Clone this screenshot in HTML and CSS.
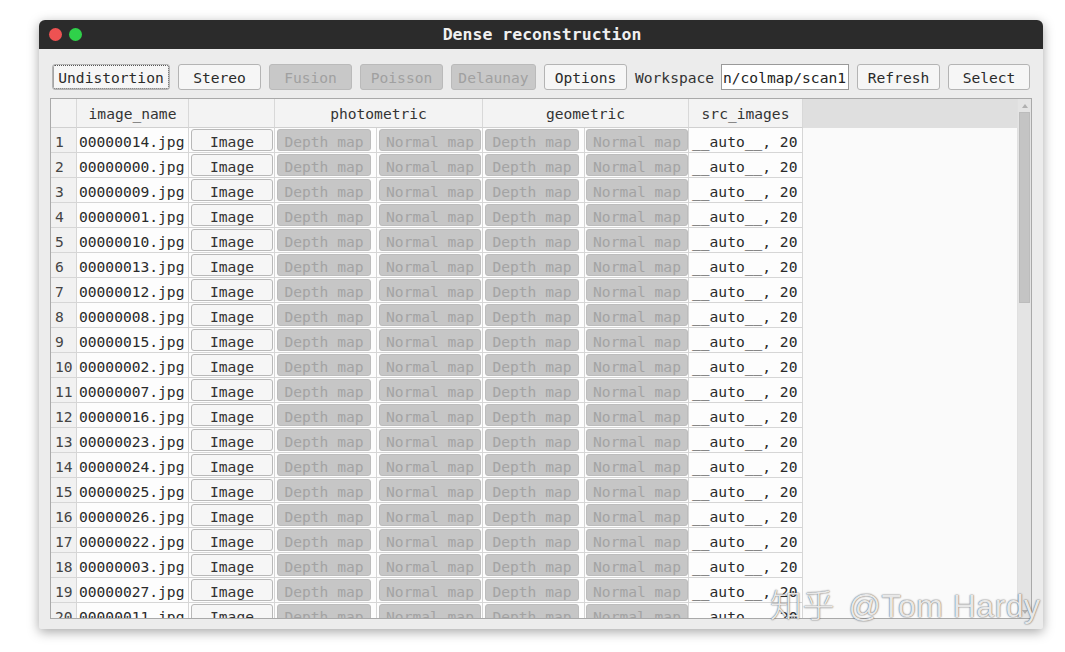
FILE: index.html
```html
<!DOCTYPE html>
<html>
<head>
<meta charset="utf-8">
<link rel="stylesheet" href="styles.css">
</head>
<body>
<div class="window">
  <div class="titlebar">
    <div class="lights"><span class="light red"></span><span class="light green"></span></div>
    <div class="title">Dense reconstruction</div>
  </div>
  <div class="content">
    <div class="toolbar">
      <button class="btn focus w118">Undistortion</button>
      <button class="btn w83">Stereo</button>
      <button class="btn dis w83">Fusion</button>
      <button class="btn dis w83">Poisson</button>
      <button class="btn dis w85">Delaunay</button>
      <button class="btn w83">Options</button>
      <span class="label">Workspace</span>
      <div class="input">n/colmap/scan1</div>
      <button class="btn w83">Refresh</button>
      <button class="btn w82">Select</button>
    </div>
    <div class="table">
      <div class="view">
        <div class="hrow">
          <div class="hc c-num"></div>
          <div class="hc c-name">image_name</div>
          <div class="hc c-img"></div>
          <div class="hc c-photo">photometric</div>
          <div class="hc c-geo">geometric</div>
          <div class="hc c-src">src_images</div>
          <div class="hc-rest"></div>
        </div>
        <div class="rows">
          <div class="row"><div class="num">1</div><div class="name">00000014.jpg</div><div class="cell c-img"><span class="b img">Image</span></div><div class="cell c-d1"><span class="b d dw">Depth map</span></div><div class="cell c-n1"><span class="b d nw">Normal map</span></div><div class="cell c-d2"><span class="b d dw">Depth map</span></div><div class="cell c-n2"><span class="b d nw">Normal map</span></div><div class="src">__auto__, 20</div></div>
          <div class="row"><div class="num">2</div><div class="name">00000000.jpg</div><div class="cell c-img"><span class="b img">Image</span></div><div class="cell c-d1"><span class="b d dw">Depth map</span></div><div class="cell c-n1"><span class="b d nw">Normal map</span></div><div class="cell c-d2"><span class="b d dw">Depth map</span></div><div class="cell c-n2"><span class="b d nw">Normal map</span></div><div class="src">__auto__, 20</div></div>
          <div class="row"><div class="num">3</div><div class="name">00000009.jpg</div><div class="cell c-img"><span class="b img">Image</span></div><div class="cell c-d1"><span class="b d dw">Depth map</span></div><div class="cell c-n1"><span class="b d nw">Normal map</span></div><div class="cell c-d2"><span class="b d dw">Depth map</span></div><div class="cell c-n2"><span class="b d nw">Normal map</span></div><div class="src">__auto__, 20</div></div>
          <div class="row"><div class="num">4</div><div class="name">00000001.jpg</div><div class="cell c-img"><span class="b img">Image</span></div><div class="cell c-d1"><span class="b d dw">Depth map</span></div><div class="cell c-n1"><span class="b d nw">Normal map</span></div><div class="cell c-d2"><span class="b d dw">Depth map</span></div><div class="cell c-n2"><span class="b d nw">Normal map</span></div><div class="src">__auto__, 20</div></div>
          <div class="row"><div class="num">5</div><div class="name">00000010.jpg</div><div class="cell c-img"><span class="b img">Image</span></div><div class="cell c-d1"><span class="b d dw">Depth map</span></div><div class="cell c-n1"><span class="b d nw">Normal map</span></div><div class="cell c-d2"><span class="b d dw">Depth map</span></div><div class="cell c-n2"><span class="b d nw">Normal map</span></div><div class="src">__auto__, 20</div></div>
          <div class="row"><div class="num">6</div><div class="name">00000013.jpg</div><div class="cell c-img"><span class="b img">Image</span></div><div class="cell c-d1"><span class="b d dw">Depth map</span></div><div class="cell c-n1"><span class="b d nw">Normal map</span></div><div class="cell c-d2"><span class="b d dw">Depth map</span></div><div class="cell c-n2"><span class="b d nw">Normal map</span></div><div class="src">__auto__, 20</div></div>
          <div class="row"><div class="num">7</div><div class="name">00000012.jpg</div><div class="cell c-img"><span class="b img">Image</span></div><div class="cell c-d1"><span class="b d dw">Depth map</span></div><div class="cell c-n1"><span class="b d nw">Normal map</span></div><div class="cell c-d2"><span class="b d dw">Depth map</span></div><div class="cell c-n2"><span class="b d nw">Normal map</span></div><div class="src">__auto__, 20</div></div>
          <div class="row"><div class="num">8</div><div class="name">00000008.jpg</div><div class="cell c-img"><span class="b img">Image</span></div><div class="cell c-d1"><span class="b d dw">Depth map</span></div><div class="cell c-n1"><span class="b d nw">Normal map</span></div><div class="cell c-d2"><span class="b d dw">Depth map</span></div><div class="cell c-n2"><span class="b d nw">Normal map</span></div><div class="src">__auto__, 20</div></div>
          <div class="row"><div class="num">9</div><div class="name">00000015.jpg</div><div class="cell c-img"><span class="b img">Image</span></div><div class="cell c-d1"><span class="b d dw">Depth map</span></div><div class="cell c-n1"><span class="b d nw">Normal map</span></div><div class="cell c-d2"><span class="b d dw">Depth map</span></div><div class="cell c-n2"><span class="b d nw">Normal map</span></div><div class="src">__auto__, 20</div></div>
          <div class="row"><div class="num">10</div><div class="name">00000002.jpg</div><div class="cell c-img"><span class="b img">Image</span></div><div class="cell c-d1"><span class="b d dw">Depth map</span></div><div class="cell c-n1"><span class="b d nw">Normal map</span></div><div class="cell c-d2"><span class="b d dw">Depth map</span></div><div class="cell c-n2"><span class="b d nw">Normal map</span></div><div class="src">__auto__, 20</div></div>
          <div class="row"><div class="num">11</div><div class="name">00000007.jpg</div><div class="cell c-img"><span class="b img">Image</span></div><div class="cell c-d1"><span class="b d dw">Depth map</span></div><div class="cell c-n1"><span class="b d nw">Normal map</span></div><div class="cell c-d2"><span class="b d dw">Depth map</span></div><div class="cell c-n2"><span class="b d nw">Normal map</span></div><div class="src">__auto__, 20</div></div>
          <div class="row"><div class="num">12</div><div class="name">00000016.jpg</div><div class="cell c-img"><span class="b img">Image</span></div><div class="cell c-d1"><span class="b d dw">Depth map</span></div><div class="cell c-n1"><span class="b d nw">Normal map</span></div><div class="cell c-d2"><span class="b d dw">Depth map</span></div><div class="cell c-n2"><span class="b d nw">Normal map</span></div><div class="src">__auto__, 20</div></div>
          <div class="row"><div class="num">13</div><div class="name">00000023.jpg</div><div class="cell c-img"><span class="b img">Image</span></div><div class="cell c-d1"><span class="b d dw">Depth map</span></div><div class="cell c-n1"><span class="b d nw">Normal map</span></div><div class="cell c-d2"><span class="b d dw">Depth map</span></div><div class="cell c-n2"><span class="b d nw">Normal map</span></div><div class="src">__auto__, 20</div></div>
          <div class="row"><div class="num">14</div><div class="name">00000024.jpg</div><div class="cell c-img"><span class="b img">Image</span></div><div class="cell c-d1"><span class="b d dw">Depth map</span></div><div class="cell c-n1"><span class="b d nw">Normal map</span></div><div class="cell c-d2"><span class="b d dw">Depth map</span></div><div class="cell c-n2"><span class="b d nw">Normal map</span></div><div class="src">__auto__, 20</div></div>
          <div class="row"><div class="num">15</div><div class="name">00000025.jpg</div><div class="cell c-img"><span class="b img">Image</span></div><div class="cell c-d1"><span class="b d dw">Depth map</span></div><div class="cell c-n1"><span class="b d nw">Normal map</span></div><div class="cell c-d2"><span class="b d dw">Depth map</span></div><div class="cell c-n2"><span class="b d nw">Normal map</span></div><div class="src">__auto__, 20</div></div>
          <div class="row"><div class="num">16</div><div class="name">00000026.jpg</div><div class="cell c-img"><span class="b img">Image</span></div><div class="cell c-d1"><span class="b d dw">Depth map</span></div><div class="cell c-n1"><span class="b d nw">Normal map</span></div><div class="cell c-d2"><span class="b d dw">Depth map</span></div><div class="cell c-n2"><span class="b d nw">Normal map</span></div><div class="src">__auto__, 20</div></div>
          <div class="row"><div class="num">17</div><div class="name">00000022.jpg</div><div class="cell c-img"><span class="b img">Image</span></div><div class="cell c-d1"><span class="b d dw">Depth map</span></div><div class="cell c-n1"><span class="b d nw">Normal map</span></div><div class="cell c-d2"><span class="b d dw">Depth map</span></div><div class="cell c-n2"><span class="b d nw">Normal map</span></div><div class="src">__auto__, 20</div></div>
          <div class="row"><div class="num">18</div><div class="name">00000003.jpg</div><div class="cell c-img"><span class="b img">Image</span></div><div class="cell c-d1"><span class="b d dw">Depth map</span></div><div class="cell c-n1"><span class="b d nw">Normal map</span></div><div class="cell c-d2"><span class="b d dw">Depth map</span></div><div class="cell c-n2"><span class="b d nw">Normal map</span></div><div class="src">__auto__, 20</div></div>
          <div class="row"><div class="num">19</div><div class="name">00000027.jpg</div><div class="cell c-img"><span class="b img">Image</span></div><div class="cell c-d1"><span class="b d dw">Depth map</span></div><div class="cell c-n1"><span class="b d nw">Normal map</span></div><div class="cell c-d2"><span class="b d dw">Depth map</span></div><div class="cell c-n2"><span class="b d nw">Normal map</span></div><div class="src">__auto__, 20</div></div>
          <div class="row"><div class="num">20</div><div class="name">00000011.jpg</div><div class="cell c-img"><span class="b img">Image</span></div><div class="cell c-d1"><span class="b d dw">Depth map</span></div><div class="cell c-n1"><span class="b d nw">Normal map</span></div><div class="cell c-d2"><span class="b d dw">Depth map</span></div><div class="cell c-n2"><span class="b d nw">Normal map</span></div><div class="src">__auto__, 20</div></div>
        </div>
      </div>
      <div class="vscroll">
        <div class="arrow up"></div>
        <div class="track"><div class="thumb"></div></div>
        <div class="arrow down"></div>
      </div>
    </div>
  </div>
</div>
<div class="watermark"><span class="zh">知乎</span> @Tom Hardy</div>
</body>
</html>
```

FILE: styles.css
```css
* { box-sizing: border-box; }
html, body { margin: 0; padding: 0; background: #ffffff; }
body {
  width: 1065px;
  height: 652px;
  padding: 20px 22px 0 39px;
  font-family: "DejaVu Sans Mono", "Liberation Mono", monospace;
  font-size: 14.6px;
  color: #2a2a2a;
  position: relative;
  overflow: hidden;
}
.window {
  width: 1004px;
  height: 609px;
  background: #ececec;
  border-radius: 6px 6px 2px 2px;
  box-shadow: 0 3px 12px rgba(0,0,0,0.35);
  display: flex;
  flex-direction: column;
  overflow: hidden;
}
.titlebar {
  height: 29px;
  background: #2b2b2b;
  display: flex;
  align-items: center;
  position: relative;
  flex: none;
}
.lights { display: flex; gap: 7px; padding-left: 10px; }
.light { width: 13px; height: 13px; border-radius: 50%; display: block; }
.red { background: #ee5252; }
.green { background: #2fd14a; }
.title {
  position: absolute;
  left: 0; right: 0; top: 0; bottom: 0;
  display: flex; align-items: center; justify-content: center;
  color: #f0f0f0;
  font-weight: bold;
  font-size: 16.5px;
  padding-left: 2px;
}
.content {
  flex: 1;
  min-height: 0;
  padding: 15px 11px 10px 11px;
  display: flex;
  flex-direction: column;
  gap: 8px;
}
.toolbar {
  display: flex;
  align-items: center;
  gap: 8px;
  height: 26px;
  padding-left: 2px;
  flex: none;
}
.btn {
  height: 26px;
  font-family: inherit;
  font-size: 14.6px;
  color: #2a2a2a;
  background: #f6f6f6;
  border: 1px solid #b4b4b4;
  border-radius: 3px;
  padding: 1px 0 0 0;
  margin: 0;
  display: flex; align-items: center; justify-content: center;
  flex: none;
}
.btn.focus { outline: 1px dotted #555; outline-offset: -2px; }
.btn.dis { background: #c8c8c8; border-color: #bababa; color: #a0a0a0; }
.w118 { width: 118px; }
.w83 { width: 83px; }
.w85 { width: 85px; }
.w82 { width: 82px; }
.label { width: 78px; color: #333; flex: none; white-space: nowrap; padding-top: 1px; }
.input {
  width: 128px;
  height: 26px;
  background: #ffffff;
  border: 1px solid #9a9a9a;
  display: flex;
  align-items: center;
  padding: 1px 0 0 1px;
  overflow: hidden;
  white-space: nowrap;
  color: #222;
  flex: none;
}
.table {
  flex: 1;
  min-height: 0;
  border: 1px solid #a9a9a9;
  background: #fafafa;
  display: flex;
  overflow: hidden;
}
.view { flex: 1; min-height: 0; overflow: hidden; display: flex; flex-direction: column; }
.hrow {
  display: flex;
  height: 29px;
  flex: none;
  background: #dfdfdf;
}
.hc {
  background: #f3f3f3;
  border-right: 1px solid #d8d8d8;
  border-bottom: 1px solid #d0d0d0;
  display: flex; align-items: center; justify-content: center;
  color: #333;
  padding-top: 1px;
}
.hc-rest { flex: 1; }
.c-num { width: 26px; flex: none; }
.c-name { width: 112px; flex: none; }
.c-img { width: 86px; flex: none; }
.c-photo { width: 208px; flex: none; }
.c-geo { width: 206px; flex: none; }
.c-src { width: 114px; flex: none; }
.c-d1 { width: 102px; flex: none; }
.c-n1 { width: 106px; flex: none; }
.c-d2 { width: 102px; flex: none; }
.c-n2 { width: 104px; flex: none; }
.rows { flex: 1; min-height: 0; overflow: hidden; }
.row { display: flex; height: 25px; }
.row > div { border-bottom: 1px solid #d6d6d6; border-right: 1px solid #d6d6d6; height: 25px; }
.num {
  width: 26px; flex: none;
  background: #f1f1f1;
  color: #444;
  padding: 2px 0 0 4px;
  display: flex; align-items: center;
  white-space: nowrap;
}
.name {
  width: 112px; flex: none;
  background: #fdfdfd;
  padding: 2px 0 0 2px;
  display: flex; align-items: center;
  white-space: nowrap;
}
.cell {
  background: #fdfdfd;
  padding: 1px 0 0 2px;
}
.b {
  display: flex; align-items: center; justify-content: center;
  height: 22px;
  padding-top: 2px;
  border-radius: 3px;
  white-space: nowrap;
}
.img { width: 82px; background: #f6f6f6; border: 1px solid #b8b8b8; color: #333; }
.d { background: #c6c6c6; border: 1px solid #bcbcbc; color: #a3a3a3; }
.dw { width: 94px; }
.nw { width: 102px; }
.c-n2 { padding-left: 1px; }
.src {
  width: 114px; flex: none;
  background: #fdfdfd;
  padding: 2px 0 0 3px;
  display: flex; align-items: center;
  white-space: nowrap;
}
.vscroll {
  width: 14px;
  flex: none;
  background: #e4e4e4;
  display: flex;
  flex-direction: column;
  border-left: 1px solid #e0e0e0;
}
.arrow { height: 13px; flex: none; display: flex; align-items: center; justify-content: center; }
.arrow.up::before {
  content: ""; border-left: 3px solid transparent; border-right: 3px solid transparent;
  border-bottom: 4px solid #b0b0b0;
}
.arrow.down::before {
  content: ""; border-left: 3px solid transparent; border-right: 3px solid transparent;
  border-top: 4px solid #b0b0b0;
}
.track { flex: 1; padding: 0 1px; }
.thumb { height: 191px; background: #c4c4c4; border: 1px solid #bcbcbc; }
.watermark {
  position: absolute;
  left: 770px;
  top: 580px;
  font-family: "Liberation Sans", "Noto Sans CJK SC", sans-serif;
  font-size: 32px;
  font-weight: 300;
  color: rgba(255,255,255,0.85);
  text-shadow: 0 0 1px #666, 0 0 2px rgba(0,0,0,0.45);
  white-space: nowrap;
  letter-spacing: 0.5px;
}
.watermark .zh { font-family: "Noto Sans CJK SC", sans-serif; font-weight: 300; margin-right: 4px; }
```
